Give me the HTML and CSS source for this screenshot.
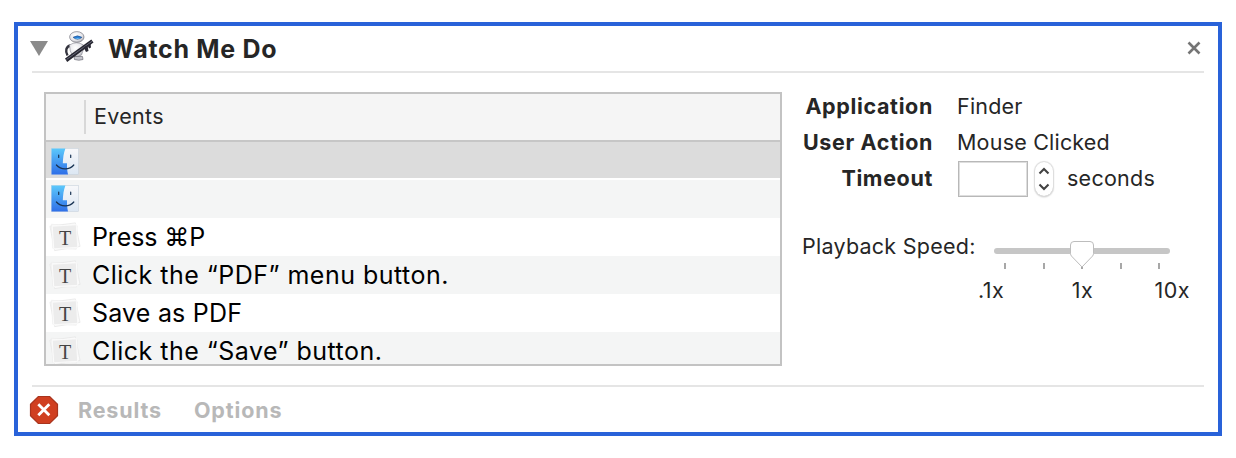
FILE: index.html
```html
<!DOCTYPE html>
<html lang="en">
<head>
<meta charset="utf-8">
<title>Watch Me Do</title>
<link rel="stylesheet" href="styles.css">
</head>
<body>
<svg width="0" height="0" class="defs">
  <defs>
    <linearGradient id="blue" x1="0" y1="0" x2="0" y2="1"><stop offset="0" stop-color="#5bc8fb"/><stop offset="1" stop-color="#2f6fe8"/></linearGradient>
    <linearGradient id="pale" x1="0" y1="0" x2="0" y2="1"><stop offset="0" stop-color="#f8f8fa"/><stop offset="1" stop-color="#dce7f3"/></linearGradient>
    <radialGradient id="shell" cx=".42" cy=".35" r=".75"><stop offset="0" stop-color="#fff"/><stop offset=".6" stop-color="#e6e6ea"/><stop offset="1" stop-color="#8f8f98"/></radialGradient>
    <symbol id="finder" viewBox="0 0 28 28">
      <rect x=".5" y=".5" width="27" height="26" fill="url(#pale)" stroke="#c9d3dd" stroke-width=".6"/>
      <path d="M.5.5H14.4C12.6 5 12 10 11.800 15.300h4.200c-.1 4.300.2 8 1 11.200H.5z" fill="url(#blue)"/>
      <path d="M7.700 7v2.500M19.700 7v2.500" stroke="#193454" stroke-width="1.200" stroke-linecap="round"/>
      <path d="M5.400 17c4.300 5.100 13.300 5.100 17.400 0" fill="none" stroke="#193454" stroke-width="1.200" stroke-linecap="round"/>
    </symbol>
    <symbol id="clip" viewBox="0 0 34 32">
      <path d="M1 4.500 28 1l5 25L6 30.500z" fill="#fafafa" stroke="#e4e4e4" stroke-width=".7"/>
      <path d="M2.500 2.500 30 4l-1 25-25-1z" fill="#f8f8f8" stroke="#e8e8e8" stroke-width=".5"/>
      <path d="M3.500 4.500 29 3l1.500 24L5 28.500z" fill="#ececec" stroke="#fbfbfb" stroke-width="1"/>
    </symbol>
  </defs>
</svg>
<main class="action">
  <header class="titlebar">
    <svg class="disclosure" viewBox="0 0 18 15"><path d="M0 0h18L9 15z" fill="#8b8b8b"/></svg>
    <svg class="robot" viewBox="0 0 30 32">
      <path d="M6.500 14.500C2 15.500 1 20 3.500 24.500" fill="none" stroke="#34343e" stroke-width="2.400"/>
      <path d="M5.500 14q7-4.500 14 0 .5 5-2 10-5 3.500-9 1-3-5-3-11z" fill="url(#shell)" stroke="#8a8a93" stroke-width=".6"/>
      <path d="M10 25.500h8.500l.5 3q-4 1.500-8.500 0z" fill="#c4c4cb" stroke="#5a5a64" stroke-width=".6"/>
      <ellipse cx="12.800" cy="6" rx="7.200" ry="5.400" fill="url(#shell)" stroke="#7b7b84" stroke-width=".7"/>
      <path d="M9 6.300q4.300-3 9 0-4.500 4-9 0z" fill="#2b80d8" stroke="#1c3e70" stroke-width=".5"/>
      <path d="m11 7 5-.1q-2 1.500-5 .1z" fill="#77d2ff"/>
      <path d="M1 27.500 27.300 8.500l2.200 3L3.200 31z" fill="#262630"/>
      <path d="M2.500 28.500 28 10.300" stroke="#77778a" stroke-width=".8"/>
      <path d="m19.500 16 2.500 5 2.500-1-1-5.500zM23.500 14l1.500 3.500 2-1-.5-4z" fill="#292934"/>
    </svg>
    <h1 class="title">Watch Me Do</h1>
    <svg class="close" viewBox="0 0 14 14"><path d="m1.500 1.500 11 11m0-11-11 11" stroke="#757575" stroke-width="2.600"/></svg>
  </header>
  <section class="content">
    <div class="events">
      <div class="events-head"><span class="head-icon"></span><span class="head-text">Events</span></div>
      <div class="row selected"><svg class="finder"><use href="#finder"/></svg></div>
      <div class="row alt"><svg class="finder"><use href="#finder"/></svg></div>
      <div class="row"><span class="clip"><svg class="clip-art"><use href="#clip"/></svg><span class="clip-letter">T</span></span><span class="event-text press">Press ⌘P</span></div>
      <div class="row alt"><span class="clip"><svg class="clip-art"><use href="#clip"/></svg><span class="clip-letter">T</span></span><span class="event-text wide">Click the “PDF” menu button.</span></div>
      <div class="row"><span class="clip"><svg class="clip-art"><use href="#clip"/></svg><span class="clip-letter">T</span></span><span class="event-text">Save as PDF</span></div>
      <div class="row alt"><span class="clip"><svg class="clip-art"><use href="#clip"/></svg><span class="clip-letter">T</span></span><span class="event-text wide">Click the “Save” button.</span></div>
    </div>
    <div class="settings">
      <div class="field"><span class="label">Application</span><span class="value">Finder</span></div>
      <div class="field"><span class="label">User Action</span><span class="value">Mouse Clicked</span></div>
      <div class="field"><span class="label">Timeout</span><span class="timeout-box"></span>
        <span class="stepper"><svg viewBox="0 0 20 36" width="20" height="36"><path d="m5.500 12.500 4.500-4.500 4.500 4.500M5.500 23.500l4.500 4.500 4.500-4.500" fill="none" stroke="#424242" stroke-width="2.100"/></svg></span>
        <span class="unit">seconds</span></div>
      <div class="playback">
        <span class="playback-label">Playback Speed:</span>
        <div class="slider">
          <svg class="track" width="176" height="34" viewBox="0 0 176 34">
            <rect x="0" y="9" width="176" height="6" rx="3" fill="#c6c6c6"/>
            <path d="M11 24v6M50 24v6M88 24v6M127 24v6M165 24v6" stroke="#999" stroke-width="1.700"/>
            <path d="M80 2.500h16q3.500 0 3.500 3.500v8.500q0 1.500-1 2.600L88 28 77.500 17.100q-1-1.100-1-2.600V6q0-3.500 3.500-3.500z" fill="#fff" stroke="#bdbdbd"/>
          </svg>
          <div class="marks"><span>.1x</span><span class="mid">1x</span><span>10x</span></div>
        </div>
      </div>
    </div>
  </section>
  <footer class="footer">
    <svg class="stop" viewBox="0 0 30 30"><path d="M9.300 1.500h11.400l7.800 7.800v11.400l-7.800 7.800H9.300l-7.800-7.800V9.300z" fill="#d03f20" stroke="#a8341d" stroke-width="1.200"/><path d="m9.300 9.300 11 11m0-11-11 11" stroke="#fff" stroke-width="2.800"/></svg>
    <span class="tab results">Results</span><span class="tab">Options</span>
  </footer>
</main>
</body>
</html>
```
FILE: styles.css
```css
* { box-sizing: border-box; }
body { margin: 0; background: #fff; font-family: Inter, "Liberation Sans", sans-serif; color: #262626; font-size: 21.5px; }
svg { display: block; flex: none; }
.defs { position: absolute; }
.action { width: 1208px; height: 414px; margin: 22px 0 0 14px; border: 4px solid #2962d9; padding: 0 14px; display: flex; flex-direction: column; white-space: nowrap; }
.titlebar { height: 47px; border-bottom: 2px solid #e5e5e5; display: flex; align-items: center; }
.disclosure { width: 18px; height: 15px; margin-left: -2px; }
.robot { width: 30px; height: 32px; margin: -3px 0 0 16px; }
.title { margin: 0 0 0 14px; font-size: 25px; line-height: 30px; font-weight: 700; letter-spacing: .7px; }
.close { width: 14px; height: 14px; margin: -2px 3px 0 auto; }
.content { height: 314px; border-bottom: 2px solid #e5e5e5; display: flex; padding: 19px 0 0 12px; }
.events { width: 738px; height: 274px; border: 2px solid #c3c3c3; overflow: hidden; flex: none; }
.events-head { height: 48px; background: #f5f5f5; border-bottom: 2px solid #c6c6c6; display: flex; align-items: center; }
.head-icon { width: 40px; height: 34px; border-right: 2px solid #d8d8d8; }
.head-text { margin: -2px 0 0 8px; letter-spacing: .3px; }
.row { height: 38px; display: flex; align-items: center; padding-left: 4px; }
.selected { background: #dcdcdc; border-bottom: 2px solid #fff; }
.alt { background: #f4f5f5; }
.finder { width: 28px; height: 28px; margin-left: 1px; }
.selected .finder { margin-top: 3px; }
.clip { width: 32px; height: 32px; display: grid; flex: none; margin-left: -1px; }
.clip-art { width: 32px; height: 32px; grid-area: 1 / 1; }
.clip-letter { grid-area: 1 / 1; place-self: center; font: 20px/24px "Liberation Serif", serif; color: #444; margin: 2px 0 0 0; }
.event-text { margin-left: 11px; font-size: 25px; line-height: 38px; color: #000; letter-spacing: .2px; }
.press { letter-spacing: -.1px; }
.wide { letter-spacing: .48px; }
.settings { padding-left: 20px; flex: 1; margin-top: -4px; }
.field { height: 36px; display: flex; align-items: center; }
.label { width: 131px; font-weight: 700; letter-spacing: .65px; margin-right: 24px; display: flex; justify-content: flex-end; }
.value { letter-spacing: .2px; }
.timeout-box { width: 70px; height: 36px; border: 1px solid #b8b8b8; box-shadow: inset 0 0 0 1px #dedede; margin: 2px 0 0 1px; }
.stepper { width: 18px; height: 34px; margin: 2px 0 0 7px; border-radius: 9px; box-shadow: 0 0 1px 1px #dcdcdc, 0 1px 2px #bbb; display: flex; align-items: center; justify-content: center; }
.unit { margin-left: 14px; letter-spacing: .25px; }
.playback { display: flex; margin-top: 35px; }
.playback-label { line-height: 30px; width: 192px; letter-spacing: .25px; }
.slider { width: 212px; padding-top: 7px; margin-top: 1px; }
.marks { display: flex; margin: 4px 0 0 -16px; width: 212px; justify-content: space-between; line-height: 26px; letter-spacing: .5px; }
.mid { margin-left: 6px; }
.footer { flex: 1; display: flex; align-items: center; font-weight: 700; color: #b8b8b8; letter-spacing: .85px; }
.stop { width: 30px; height: 30px; margin-left: -3px; }
.tab { margin-left: 32px; }
.results { margin-left: 19px; }
```
